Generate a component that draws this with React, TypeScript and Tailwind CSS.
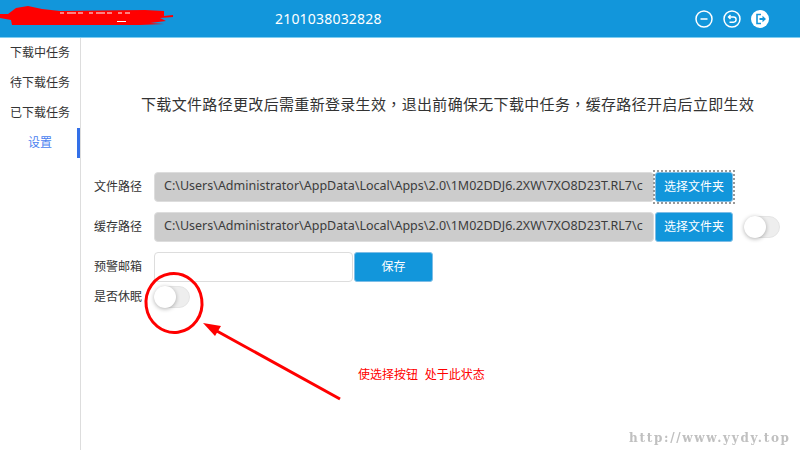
import { type ReactNode } from 'react';

const PATH = 'C:\\Users\\Administrator\\AppData\\Local\\Apps\\2.0\\1M02DDJ6.2XW\\7XO8D23T.RL7\\c';
const FONT = "font-['Noto_Sans','Noto_Sans_CJK_SC',sans-serif]";

function Toggle() {
  return (
    <div className="relative h-[22px] w-[36px] rounded-full border border-[#e5e5e5] bg-[#eeeeee]">
      <div className="absolute left-[-1px] top-[-1px] h-[22px] w-[22px] rounded-full bg-white shadow-[0_1px_4px_rgba(0,0,0,0.3)]" />
    </div>
  );
}

function BlueButton({ children, width }: { children: ReactNode; width: string }) {
  return (
    <button className={`flex h-[30px] items-center justify-center rounded-[3px] border border-[#7dbde6] bg-[#1296db] text-[12px] text-white ${width}`}>
      {children}
    </button>
  );
}

function Label({ children }: { children: ReactNode }) {
  return <div className="w-[73px] shrink-0 pl-[13px] text-[12px] whitespace-nowrap text-[#333333]">{children}</div>;
}

function PathRow({ label, focused, children }: { label: string; focused?: boolean; children?: ReactNode }) {
  return (
    <div className="flex h-[30px] items-center">
      <Label>{label}</Label>
      <div className="flex h-[30px] w-[500px] items-center overflow-hidden whitespace-nowrap rounded-[4px] border border-[#dddddd] bg-[#cccccc] pl-[9px] pr-[10px] text-[12.500px] text-[#3c3c3c]">
        <span className="block overflow-hidden">{PATH}</span>
      </div>
      <div className={`ml-px ${focused ? 'outline-2 outline-dotted outline-[#999999]' : ''}`}>
        <BlueButton width="w-[78px]">选择文件夹</BlueButton>
      </div>
      {children}
    </div>
  );
}

function HeaderIcons() {
  return (
    <div className="flex items-center gap-[10px] text-white">
      <svg width="18" height="18" viewBox="0 0 18 18" fill="none" stroke="currentColor">
        <circle cx="9" cy="9" r="8" strokeWidth="1.500" />
        <path d="M5.500 9h7" strokeWidth="1.500" />
      </svg>
      <svg width="18" height="18" viewBox="0 0 18 18" fill="none" stroke="currentColor">
        <circle cx="9" cy="9" r="8" strokeWidth="1.500" />
        <path d="M7.500 5 5.500 7l2 2M5.500 7h5a2.500 2.500 0 0 1 0 5.200H6.500" strokeWidth="1.400" />
      </svg>
      <svg width="18" height="18" viewBox="0 0 18 18">
        <circle cx="9" cy="9" r="9" fill="currentColor" />
        <path d="M10 4.500H6v9h4" fill="none" stroke="#1296db" strokeWidth="1.600" />
        <path d="M8.500 8h3V5.800L15 9l-3.500 3.200V10h-3z" fill="#1296db" />
      </svg>
    </div>
  );
}

function Annotations() {
  return (
    <svg className="pointer-events-none absolute left-0 top-0" width="800" height="450" viewBox="0 0 800 450">
      {/* scribble over the account name */}
      <path
        d="M0 14 L8 14 L16 8 L28 6 L42 9 L60 11 L145 10 L164 11 L164 16 L173 15 L173 17 L160 18 L166 21 L150 23 L164 24 L140 25 L12 25 L11 20 L0 18 Z"
        fill="#ff0000"
      />
      <path d="M60 13 H130" stroke="#ffffff" strokeWidth="1" strokeDasharray="4 3 9 2 5 6" />
      <path d="M117 21.500 H126" stroke="#ffffff" strokeWidth="1" />
      <ellipse cx="174" cy="303" rx="28" ry="29.500" fill="none" stroke="#ff0000" strokeWidth="3" transform="rotate(-8 174 303)" />
      <path d="M340 399 L215 330" stroke="#ff0000" strokeWidth="3" fill="none" />
      <path d="M203 323 L221 326 L215 336 Z" fill="#ff0000" />
    </svg>
  );
}

export default function App() {
  return (
    <div className={`relative h-[450px] w-[800px] overflow-hidden bg-white ${FONT}`}>
      <header className="flex h-[38px] items-center justify-between border-b border-[#7fcdf0] bg-[#1296db] pr-[31px] text-white">
        <div className="pl-[275px] text-[14px] tracking-[0.2px]">2101038032828</div>
        <HeaderIcons />
      </header>

      <div className="flex h-[412px]">
        <aside className="w-[81px] border-r border-[#dddddd] text-[12px] text-[#333333]">
          <div className="flex h-[30px] items-center pl-[10px]">下载中任务</div>
          <div className="flex h-[30px] items-center pl-[10px]">待下载任务</div>
          <div className="flex h-[30px] items-center pl-[10px]">已下载任务</div>
          <div className="flex h-[30px] items-center border-r-[3px] border-[#3370e8] pl-[28px] text-[#4a7ff0]">设置</div>
        </aside>

        <main className="flex-1">
          {/* TC font only for the commas, they sit centred in the cell */}
          <p className="mt-[55px] pl-[60px] text-[15px] tracking-[0.33px] whitespace-nowrap text-[#333333]">
            下载文件路径更改后需重新登录生效<span className="font-['Noto_Sans_CJK_TC',sans-serif]">，</span>退出前确保无下载中任务<span className="font-['Noto_Sans_CJK_TC',sans-serif]">，</span>缓存路径开启后立即生效
          </p>

          <div className="mt-[56px] flex flex-col gap-[10px]">
            <PathRow label="文件路径" focused />
            <PathRow label="缓存路径">
              <div className="ml-[11px]">
                <Toggle />
              </div>
            </PathRow>
            <div className="flex h-[30px] items-center">
              <Label>预警邮箱</Label>
              <div className="h-[30px] w-[199px] rounded-[4px] border border-[#dddddd] bg-white" />
              <div className="ml-px">
                <BlueButton width="w-[79px]">保存</BlueButton>
              </div>
            </div>
          </div>

          <div className="mt-[3px] flex h-[24px] items-center">
            <Label>是否休眠</Label>
            <Toggle />
          </div>
        </main>
      </div>

      <Annotations />

      <div className="absolute left-[358px] top-[366px] font-['Liberation_Sans','Noto_Sans_CJK_SC',sans-serif] text-[12px] whitespace-pre text-[#ff0000]">
        使选择按钮  处于此状态
      </div>
      <div className="absolute left-[629px] top-[429px] font-['DejaVu_Serif',serif] text-[12px] font-bold tracking-[1.7px] text-[#c0c0c0] blur-[0.3px]">
        http://www.yydy.top
      </div>
    </div>
  );
}
